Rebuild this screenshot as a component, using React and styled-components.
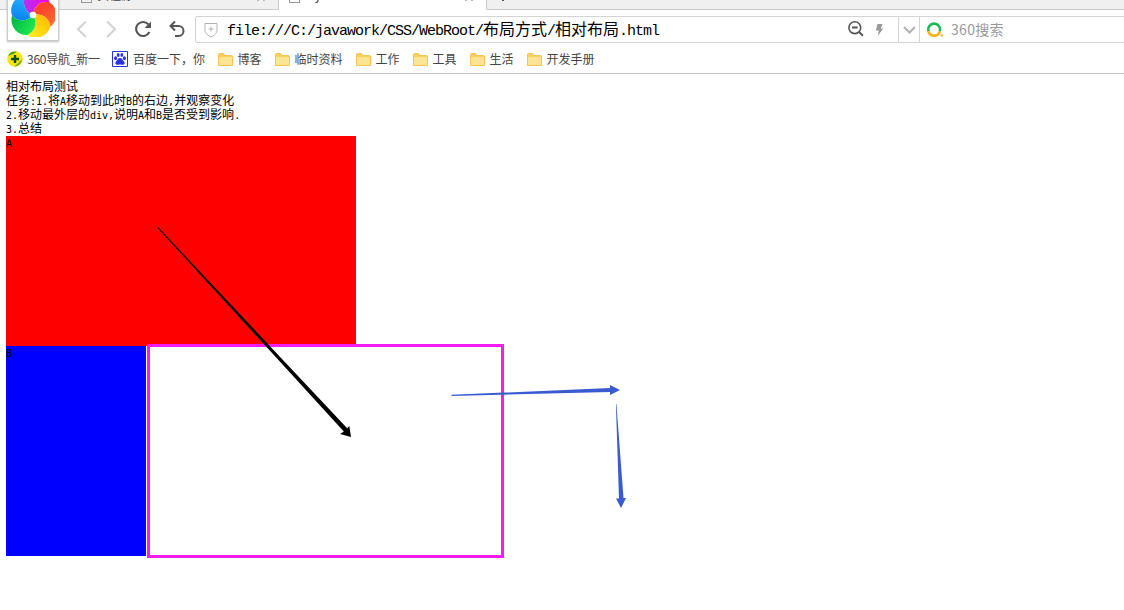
import React from 'react';
import styled, { createGlobalStyle } from 'styled-components';

const Global = createGlobalStyle`
  * { box-sizing: border-box; }
  body { margin: 0; background: #fff; overflow: hidden; }
`;

const cjk = '"Noto Sans CJK SC", sans-serif';
const mono = '"Liberation Mono", "Noto Sans CJK SC", monospace';
const smallMono = '"DejaVu Sans Mono", "Noto Sans CJK SC", monospace';

const Window = styled.div`
  position: relative;
  width: 1124px;
  height: 610px;
  overflow: hidden;
  background: #fff;
  font-family: ${cjk};
`;
const TabStrip = styled.div`
  display: flex;
  height: 10px;
  overflow: hidden;
  background: #f0f0f0;
`;
const Tab = styled.div`
  display: flex;
  width: ${p => p.$w}px;
  height: 10px;
  padding-left: ${p => p.$pad}px;
  background: ${p => (p.$active ? '#fff' : '#f0f0f0')};
  border-bottom: 1px solid ${p => (p.$active ? '#fff' : '#c9c9c9')};
  border-right: ${p => (p.$w ? 1 : 0)}px solid #c9c9c9;
  flex: ${p => (p.$w ? 'none' : 1)};
`;
const TabIcon = styled.div`
  flex: none;
  width: 11px;
  height: 3px;
  border: 1px solid #999;
  border-top: 0;
`;
const TabTitle = styled.div`
  flex: 1;
  height: 4px;
  margin-left: 5px;
  overflow: hidden;
  color: #444;
  font-size: 12px;
  line-height: 16px;
  span { display: block; margin-top: -13px; }
`;
const TabClose = styled.div`
  width: 8px;
  height: 1px;
  margin-right: 13px;
  border: solid #bbb;
  border-width: 0 2px;
`;
const NewTab = styled.div`
  width: 2px;
  height: 1px;
  background: #555;
`;
const LogoCard = styled.div`
  position: absolute;
  left: 7px;
  top: -10px;
  width: 52px;
  height: 51px;
  background: #fff;
  border: 1px solid #ccc;
  box-shadow: 0 1px 2px #bbb;
  svg { display: block; margin: 2px 0 0 3px; }
`;
const Toolbar = styled.div`
  display: flex;
  height: 39px;
  padding: 6px 0;
`;
const NavButtons = styled.div`
  width: 195px;
  padding-left: 72px;
  svg { display: block; }
`;
const AddressBar = styled.div`
  display: flex;
  align-items: center;
  width: 704px;
  height: 27px;
  padding-left: 8px;
  border: 1px solid #d4d4d4;
  border-radius: 2px 0 0 2px;
`;
const Url = styled.div`
  flex: 1;
  margin: 0 0 0 9px;
  color: #000;
  font-size: 16px;
  line-height: 24px;
  white-space: pre;
`;
const UrlLatin = styled.span`
  font-family: ${mono};
  font-size: 15px;
  letter-spacing: -1.002px;
`;
const DropButton = styled.div`
  display: flex;
  align-items: center;
  justify-content: center;
  width: 21px;
  height: 27px;
  border: solid #d4d4d4;
  border-width: 1px 1px 1px 0;
`;
const SearchBox = styled.div`
  display: flex;
  align-items: center;
  flex: 1;
  height: 27px;
  padding-left: 6px;
  gap: 7px;
  border: solid #d4d4d4;
  border-width: 1px 0;
  color: #999;
  font-size: 14px;
  line-height: 22px;
  svg { margin-top: 2px; }
  span { margin-top: -2px; letter-spacing: 0.3px; }
`;
const Bookmarks = styled.div`
  height: 25px;
  border-bottom: 1px solid #c4c4c4;
  display: flex;
  padding-left: 7px;
`;
const Bookmark = styled.div`
  display: flex;
  align-items: center;
  flex: none;
  width: ${p => p.$w}px;
  height: 21px;
  gap: ${p => p.$gap}px;
  color: #444;
  font-size: 12px;
  line-height: 18px;
  white-space: pre;
  svg { flex: none; margin-top: -1px; }
  span { margin-top: -2px; letter-spacing: ${p => p.$track || 0}px; }
`;
const Page = styled.div`
  padding: 5px 6px 0;
  color: #000;
  font-size: 12px;
`;
const Lines = styled.div`
  height: 57px;
`;
const Line = styled.div`
  height: 14px;
  line-height: 14px;
  white-space: pre;
`;
const PageLatin = styled.span`
  font-family: ${smallMono};
  font-size: 10px;
  letter-spacing: -0.02px;
`;
const Block = styled.div`
  width: ${p => p.$w}px;
  height: 210px;
  background: ${p => p.$c};
  font-family: ${smallMono};
  font-size: 10px;
  line-height: 15px;
`;
const Target = styled.div`
  position: absolute;
  left: 147px;
  top: 344px;
  width: 357px;
  height: 214px;
  border: 3px solid #f31cf3;
`;
const Arrows = styled.svg`
  position: absolute;
  left: 0;
  top: 0;
  pointer-events: none;
`;

/* Latin runs take half the advance of a Chinese character. */
const mix = (text, Latin) =>
  text.split(/([\x20-\x7e]+)/).filter(Boolean).map((t, i) =>
    /^[\x20-\x7e]/.test(t) ? <Latin key={i}>{t}</Latin> : t);

const petals = [
  ['#fa00dc', '#b432f0'], ['#ff6e32', '#ff3c28'], ['#fff028', '#ffbe00'],
  ['#00b446', '#1ee650'], ['#28b4ff', '#0a82f0'],
];
const Logo = () => (
  <svg width="44" height="44" viewBox="-22 -22 44 44">
    <defs>
      {petals.map((c, i) => (
        <linearGradient id={`petal${i}`} key={i}>
          <stop offset="0" stopColor={c[1]} /><stop offset="1" stopColor={c[0]} />
        </linearGradient>
      ))}
    </defs>
    {petals.map((c, i) => (
      <path key={i} fill={`url(#petal${i})`} transform={`rotate(${i * 72 - 3})`}
        d="M0 0C-8-4-11-12-6-20A15 15 0 0 1 17.2-11.9C8-14.2 1.3-8.8 0 0Z" />
    ))}
    <circle r="3.3" fill="#fff" />
  </svg>
);
const NavIcons = () => (
  <svg width="120" height="27" viewBox="72 16 120 27" fill="none">
    <path d="M86 21.5L78 29.2L86 37M107 21.5L115 29.2L107 37" stroke="#d2d2d2" strokeWidth="2" />
    <path d="M148.3 24.3A7 7 0 1 0 149.4 32" stroke="#555" strokeWidth="2.1" />
    <path d="M151 21.5V28H144.5Z" fill="#555" />
    <path d="M171 26H178.5A5 5 0 0 1 178.5 36H175M175 21.5L170.5 26L175 30.5" stroke="#555" strokeWidth="2" />
  </svg>
);
const Shield = () => (
  <svg width="14" height="16" viewBox="0 0 14 16" fill="none" stroke="#b3b3b3">
    <path d="M1 1.5H13V8C13 11.5 10 13.5 7 15C4 13.5 1 11.5 1 8ZM7 4.5V9.5M4.5 7H9.5" />
  </svg>
);
const AddressIcons = () => (
  <svg width="50" height="25" viewBox="848 17 50 25" fill="none">
    <circle cx="854.8" cy="27.7" r="5.9" stroke="#555" strokeWidth="1.6" />
    <path d="M852 27.5H857.6M859 32L863 35.8" stroke="#555" strokeWidth="1.9" />
    <path d="M877.5 24H882.5L880.8 28.4H883.2L877.8 36L878.8 30.5H875.8Z" fill="#999" />
  </svg>
);
const Folder = () => (
  <svg width="15" height="13" viewBox="0 0 15 13">
    <path d="M.5 1.5Q.5.5 1.5.5H5.5L7 2.5H13.5Q14.5 2.5 14.5 3.5V12.5H.5Z" fill="#f5d060" stroke="#f3c552" />
    <path d="M1 4H14V12H1Z" fill="#fde594" />
  </svg>
);
const NavSite = () => (
  <svg width="16" height="16" viewBox="0 0 16 16">
    <circle cx="8" cy="8" r="7.8" fill="#f8e414" />
    <path d="M1 5Q4-.5 10 .8Q6 4 1 5ZM15 8Q14 15 7 15.5Q12 13 15 8Z" fill="#46a51e" />
    <path d="M8 4V12M4 8H12" stroke="#084c08" strokeWidth="2.4" />
  </svg>
);
const Paw = () => (
  <svg width="16" height="16" viewBox="0 0 16 16">
    <path d="M.5.5H15.5V15.5H.5Z" fill="#fff" stroke="#2932e1" />
    <g fill="#2932e1">
      <ellipse cx="3.6" cy="7.2" rx="1.5" ry="1.9" /><ellipse cx="6.2" cy="4" rx="1.4" ry="2" />
      <ellipse cx="9.8" cy="4" rx="1.4" ry="2" /><ellipse cx="12.4" cy="7.2" rx="1.5" ry="1.9" />
      <path d="M8 7C10 7 10.5 9 12 10.5C13.5 12.5 12 14.2 10 13.8Q8 13.3 6 13.8C4 14.2 2.5 12.5 4 10.5C5.5 9 6 7 8 7Z" />
    </g>
  </svg>
);
const SearchLogo = () => (
  <svg width="18" height="17" viewBox="0 0 18 17" fill="none" strokeWidth="2.6">
    <path d="M2.4 9.3A6 6 0 1 1 13.9 9.3" stroke="#19b955" />
    <path d="M2.4 9.3A6 6 0 0 0 13.9 9.3" stroke="#fbb116" />
    <circle cx="15.8" cy="13.5" r="1.2" fill="#fbb116" />
  </svg>
);

const folders = [['博客', 57], ['临时资料', 81], ['工作', 57], ['工具', 57], ['生活', 57], ['开发手册', 80]];
const lines = ['相对布局测试', '任务:1.将A移动到此时B的右边,并观察变化', '2.移动最外层的div,说明A和B是否受到影响.', '3.总结'];

export default function App() {
  return (
    <Window>
      <Global />
      <TabStrip>
        <Tab $w={279} $pad={81}><TabIcon /><TabTitle><span>实程源</span></TabTitle><TabClose /></Tab>
        <Tab $w={208} $pad={10} $active><TabIcon /><TabTitle><span>My JSP</span></TabTitle><TabClose /></Tab>
        <Tab $pad={15}><NewTab /></Tab>
      </TabStrip>
      <Toolbar>
        <NavButtons><NavIcons /></NavButtons>
        <AddressBar>
          <Shield />
          <Url>{mix('file:///C:/javawork/CSS/WebRoot/布局方式/相对布局.html', UrlLatin)}</Url>
          <AddressIcons />
        </AddressBar>
        <DropButton>
          <svg width="13" height="8" viewBox="0 0 13 8"><path d="M1 1L6.5 6.5L12 1" fill="none" stroke="#b2b2b2" strokeWidth="2" /></svg>
        </DropButton>
        <SearchBox><SearchLogo /><span>360搜索</span></SearchBox>
      </Toolbar>
      <Bookmarks>
        <Bookmark $w={105} $gap={4} $track={-0.25}><NavSite /><span>360导航_新一</span></Bookmark>
        <Bookmark $w={106} $gap={5}><Paw /><span>百度一下，你</span></Bookmark>
        {folders.map(([name, w]) => <Bookmark key={name} $w={w} $gap={4.5}><Folder /><span>{name}</span></Bookmark>)}
      </Bookmarks>
      <LogoCard><Logo /></LogoCard>
      <Page>
        <Lines>{lines.map(t => <Line key={t}>{mix(t, PageLatin)}</Line>)}</Lines>
        <Block $w={350} $c="#f00">A</Block>
        <Block $w={140} $c="#00f">B</Block>
      </Page>
      <Target />
      <Arrows width="1124" height="610">
        <path d="M158.2 227.3L347.2 428.3L349.3 426L351 437L340 434L343.8 431.5L157.5 227.9Z" fill="#000" />
        <path d="M451.5 394.8L610 388V385L620 390L610 395V392L451.5 396Z" fill="#3a5bd0" />
        <path d="M615.9 404H616.4L623.5 498H626L621 508L616 498.5H619Z" fill="#3a5bd0" />
      </Arrows>
    </Window>
  );
}
